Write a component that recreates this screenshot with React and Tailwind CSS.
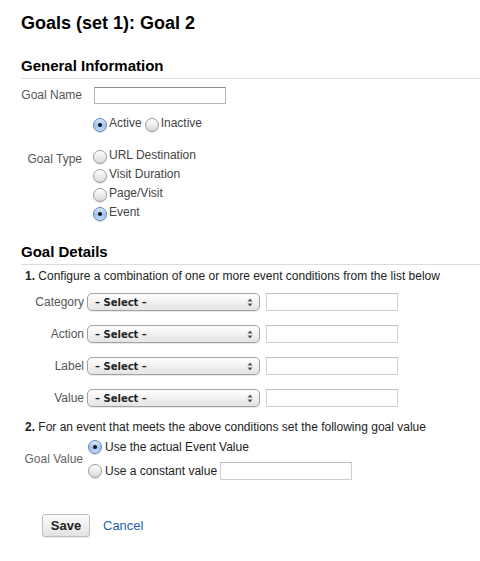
import React from "react";

const Radio = ({ checked }) =>
  checked ? (
    <span className="flex h-[14px] w-[14px] shrink-0 items-center justify-center rounded-full border border-[#5f86bd] bg-[linear-gradient(#d9e9fa,#9cc3ec_55%,#c4ddf7)] shadow-[0_1px_1px_rgba(0,0,0,0.15)]">
      <span className="h-[4px] w-[4px] rounded-full bg-[#111]" />
    </span>
  ) : (
    <span className="block h-[14px] w-[14px] shrink-0 rounded-full border border-[#9d9d9d] bg-[linear-gradient(#ffffff,#e9e9e9_60%,#d6d6d6)] shadow-[0_1px_1px_rgba(0,0,0,0.12)]" />
  );

const SelectBox = () => (
  <div className="flex h-[18px] w-[173px] items-center justify-between rounded-[5px] border border-[#a2a2a2] bg-[linear-gradient(#ffffff,#f1f1f1_50%,#e4e4e4)] pl-[7px] pr-[6px] shadow-[0_1px_1px_rgba(0,0,0,0.1)]">
    <span className="font-['DejaVu_Sans',sans-serif] text-[10px] font-bold text-[#222]">
      – Select –
    </span>
    <svg width="6" height="9" viewBox="0 0 6 9">
      <path d="M3 0.5 L5.5 3.5 L0.5 3.5 Z" fill="#555" />
      <path d="M3 8.5 L5.5 5.5 L0.5 5.5 Z" fill="#555" />
    </svg>
  </div>
);

const TextInput = ({ className = "" }) => (
  <input
    type="text"
    className={
      "h-[18px] w-[132px] border border-[#cfcfcf] border-t-[#bdbdbd] bg-white outline-none " +
      className
    }
  />
);

const conditions = ["Category", "Action", "Label", "Value"];
const goalTypes = [
  ["URL Destination", false],
  ["Visit Duration", false],
  ["Page/Visit", false],
  ["Event", true],
];

export default function App() {
  return (
    <div className="bg-white pl-[21px] pt-[12px] font-['Liberation_Sans',Arial,sans-serif] text-[12px] text-[#222]">
      <h1 className="text-[18px] font-bold leading-[22px] text-black">
        Goals (set 1): Goal 2
      </h1>

      {/* General Information */}
      <h2 className="mt-[23px] border-b border-[#dcdcdc] pb-[3px] text-[15px] font-bold leading-[18px] text-black">
        General Information
      </h2>

      <div className="mt-[7px] flex items-center">
        <div className="w-[61px] text-right text-[#555]">Goal Name</div>
        <input
          type="text"
          className="ml-[12px] h-[17px] w-[132px] border border-[#b5b5b5] border-t-[#8f8f8f] bg-white outline-none"
        />
      </div>

      <div className="ml-[72px] mt-[10px] flex h-[19px] items-start leading-[19px] text-[#444]">
        <span className="mt-[4px]">
          <Radio checked />
        </span>
        <span className="ml-[2px]">Active</span>
        <span className="ml-[3px] mt-[4px]">
          <Radio />
        </span>
        <span className="ml-[2px]">Inactive</span>
      </div>

      <div className="mt-[13px] flex">
        <div className="w-[61px] pt-[4px] text-right leading-[19px] text-[#555]">
          Goal Type
        </div>
        <div className="ml-[11px] flex flex-col text-[#444]">
          {goalTypes.map(([label, checked]) => (
            <div key={label} className="flex h-[19px] items-start leading-[19px]">
              <span className="mt-[4px]">
                <Radio checked={checked} />
              </span>
              <span className="ml-[2px]">{label}</span>
            </div>
          ))}
        </div>
      </div>

      {/* Goal Details */}
      <h2 className="mt-[21px] border-b border-[#dcdcdc] pb-[3px] text-[15px] font-bold leading-[18px] text-black">
        Goal Details
      </h2>

      <p className="mt-[3px] pl-[4px] leading-[16px] text-[#222]">
        <span className="font-bold">1.</span> Configure a combination of one or
        more event conditions from the list below
      </p>

      <div className="mt-[9px] flex flex-col gap-[14px]">
        {conditions.map((c) => (
          <div key={c} className="flex h-[18px] items-center">
            <div className="w-[63px] text-right text-[#555]">{c}</div>
            <div className="ml-[3px]">
              <SelectBox />
            </div>
            <TextInput className="ml-[6px]" />
          </div>
        ))}
      </div>

      <p className="mt-[12px] pl-[4px] leading-[16px] text-[#222]">
        <span className="font-bold">2.</span> For an event that meets the above
        conditions set the following goal value
      </p>

      <div className="mt-[2px] flex items-center">
        <div className="w-[62px] text-right text-[#666]">Goal Value</div>
        <div className="ml-[5px] flex flex-col gap-[5px] text-[#222]">
          <div className="flex h-[19px] items-center">
            <Radio checked />
            <span className="ml-[3px]">Use the actual Event Value</span>
          </div>
          <div className="flex h-[19px] items-center">
            <Radio />
            <span className="ml-[3px]">Use a constant value</span>
            <TextInput className="ml-[3px] h-[17px]" />
          </div>
        </div>
      </div>

      <div className="ml-[21px] mt-[34px] flex items-center pb-[24px]">
        <button className="h-[23px] w-[48px] rounded-[3px] border border-[#bcbcbc] bg-[linear-gradient(#fdfdfd,#ececec_60%,#e2e2e2)] text-[13px] font-bold text-[#222] shadow-[0_1px_1px_rgba(0,0,0,0.08)]">
          Save
        </button>
        <a className="ml-[13px] cursor-pointer text-[13px] text-[#1f62b4]">
          Cancel
        </a>
      </div>
    </div>
  );
}
